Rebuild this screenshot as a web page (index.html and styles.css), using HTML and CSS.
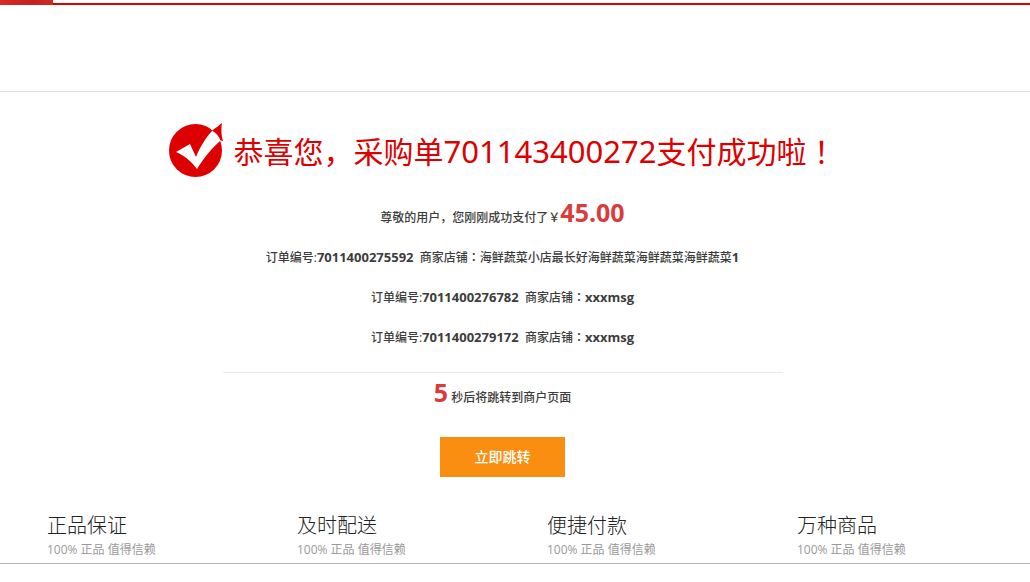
FILE: index.html
```html
<!DOCTYPE html>
<html lang="zh-CN">
<head>
<meta charset="utf-8">
<meta name="viewport" content="width=device-width, initial-scale=1">
<title>支付成功</title>
<link rel="stylesheet" href="styles.css">
</head>
<body>
<header class="site-header"><div class="brand-strip"></div></header>
<main class="result">
  <div class="result-heading">
    <svg class="result-icon" viewBox="0 0 54 54" aria-hidden="true">
      <circle cx="26.500" cy="27.500" r="26.500" fill="#d00"/>
      <path d="M7 29 L21 21 L27 34 C31 24 37 14 44 7 L52 17 C43 25 34 36 28 46 C22 38 16 33 7 29Z" fill="#fff"/>
      <path d="M42 6 L52 18 L54 15 L54 0 L48 2Z" fill="#fff"/>
      <path d="M43 7.500 C46 5 50 3 53 0 C52 6 52 12 54 18 L51.500 17.500 C50 13 47 10 43 7.500Z" fill="#d00"/>
    </svg>
    <h1 class="result-title">恭喜您，采购单<span class="title-number">701143400272</span>支付成功啦<span class="mark" lang="zh-TW">！</span></h1>
  </div>
  <p class="line">尊敬的用户，您刚刚成功支付了￥<strong class="highlight">45.00</strong></p>
  <p class="line">订单编号:<b class="value">7011400275592</b>&nbsp; 商家店铺<span class="mark" lang="zh-TW">：</span>海鲜蔬菜小店最长好海鲜蔬菜海鲜蔬菜海鲜蔬菜<b class="value">1</b></p>
  <p class="line">订单编号:<b class="value">7011400276782</b>&nbsp; 商家店铺<span class="mark" lang="zh-TW">：</span><b class="value">xxxmsg</b></p>
  <p class="line">订单编号:<b class="value">7011400279172</b>&nbsp; 商家店铺<span class="mark" lang="zh-TW">：</span><b class="value">xxxmsg</b></p>
  <hr class="divider">
  <p class="line"><strong class="highlight">5</strong> 秒后将跳转到商户页面</p>
  <button class="jump" type="button">立即跳转</button>
</main>
<footer class="promises">
  <section><h2 class="promise-title">正品保证</h2><p class="promise-note">100% 正品 值得信赖</p></section>
  <section><h2 class="promise-title">及时配送</h2><p class="promise-note">100% 正品 值得信赖</p></section>
  <section><h2 class="promise-title">便捷付款</h2><p class="promise-note">100% 正品 值得信赖</p></section>
  <section><h2 class="promise-title">万种商品</h2><p class="promise-note">100% 正品 值得信赖</p></section>
</footer>
</body>
</html>
```
FILE: styles.css
```css
* { box-sizing: border-box; }
body {
  margin: 0;
  background: #fff;
  color: #3c3c3c;
  font: 12px/24px "Open Sans", "Noto Sans CJK SC", sans-serif;
}
h1, h2, p { margin: 0; }
.site-header {
  height: 92px;
  border-bottom: 1px solid #ddd;
  background: linear-gradient(#d00, #d00) 0 3px / 100% 2px no-repeat;
}
.brand-strip {
  width: 53px;
  height: 5px;
  background: linear-gradient(90deg, #d92a28, #c62020 60%, #cc2925);
}
.mark { font-family: "Noto Sans CJK TC", sans-serif; line-height: 1; }
.result {
  display: flex;
  flex-direction: column;
  align-items: center;
  padding: 31px 25px 32px 0;
}
.result-heading {
  display: flex;
  align-items: flex-start;
  gap: 11px;
  margin-bottom: 19px;
}
.result-icon { width: 54px; height: 54px; flex: none; }
.result-title {
  padding-top: 2px;
  color: #d00;
  font-size: 30px;
  line-height: 54px;
  font-weight: 400;
}
.title-number { font-family: "Noto Sans", sans-serif; font-size: 31px; line-height: 1; }
.line { line-height: 40px; font-weight: 500; }
.value { font-size: 13px; line-height: 1; }
.highlight {
  color: #d93c3c;
  font-size: 25px;
  line-height: 1;
}
.divider {
  width: 560px;
  max-width: 100%;
  margin: 14px 0 5px;
  border: 0;
  border-top: 1px solid #e8e8e8;
}
.jump {
  width: 125px;
  height: 40px;
  margin-top: 19px;
  padding: 0;
  border: 0;
  background: #f98e10;
  color: #fff;
  font: 500 14px/40px "Open Sans", "Noto Sans CJK SC", sans-serif;
  cursor: pointer;
}
.promises {
  display: grid;
  grid-template-columns: repeat(3, 1fr) 233px;
  padding: 5px 0 1px 47px;
  border-bottom: 1px solid #b5b5b5;
}
.promise-title { color: #222; font-size: 20px; line-height: 24px; font-weight: 300; }
.promise-note { color: #999; }
```
